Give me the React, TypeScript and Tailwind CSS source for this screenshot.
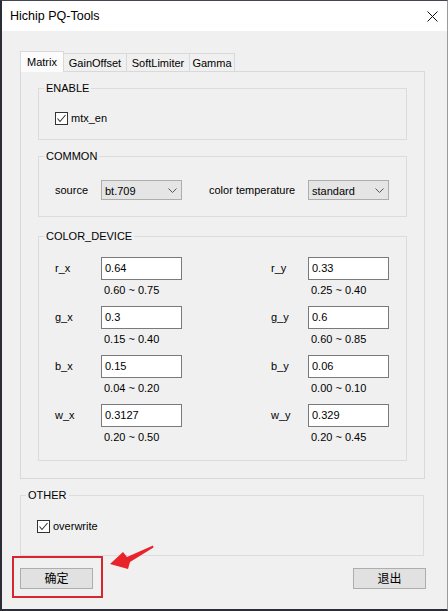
import React from "react";

const CheckBox = () => (
  <span className="w-[13px] h-[13px] border border-[#333333] bg-white flex items-center justify-center shrink-0">
    <svg width="11" height="11" viewBox="0 0 11 11">
      <polyline points="1.5,5.5 4,8.5 9.5,2" fill="none" stroke="#333333" strokeWidth="1.1" />
    </svg>
  </span>
);

const Group = ({
  title,
  className,
  children,
}: {
  title: string;
  className: string;
  children: React.ReactNode;
}) => (
  <div className={`relative border border-[#dcdcdc] ${className}`}>
    <span className="absolute -top-[7px] left-[5px] px-[2px] bg-[#f0f0f0] leading-[13px]">
      {title}
    </span>
    {children}
  </div>
);

const Combo = ({ value }: { value: string }) => (
  <div className="w-[81px] h-[20px] border border-[#adadad] bg-[#e5e5e5] flex items-center justify-between pl-[3px] pr-[4px]">
    <span className="pt-[2px]">{value}</span>
    <svg width="9" height="5" viewBox="0 0 9 5">
      <polyline points="0.5,0.5 4.5,4.5 8.5,0.5" fill="none" stroke="#555555" />
    </svg>
  </div>
);

type FieldProps = {
  label: string;
  value: string;
  range: string;
  labelW: string;
  rangePad: string;
};

const Field = ({ label, value, range, labelW, rangePad }: FieldProps) => (
  <div className="flex flex-col">
    <div className="flex items-center">
      <span className={labelW}>{label}</span>
      <div className="w-[81px] h-[23px] border border-[#7a7a7a] bg-white flex items-center pl-[3px]">
        {value}
      </div>
    </div>
    <span className={`mt-[4px] leading-[13px] ${rangePad}`}>{range}</span>
  </div>
);

const rows = [
  { l: ["r_x", "0.64", "0.60 ~ 0.75"], r: ["r_y", "0.33", "0.25 ~ 0.40"] },
  { l: ["g_x", "0.3", "0.15 ~ 0.40"], r: ["g_y", "0.6", "0.60 ~ 0.85"] },
  { l: ["b_x", "0.15", "0.04 ~ 0.20"], r: ["b_y", "0.06", "0.00 ~ 0.10"] },
  { l: ["w_x", "0.3127", "0.20 ~ 0.50"], r: ["w_y", "0.329", "0.20 ~ 0.45"] },
];

const tabs = ["GainOffset", "SoftLimiter", "Gamma"];
const tabW = ["w-[63px]", "w-[63px]", "w-[45px]"];

export default function App() {
  return (
    <div className="relative w-[448px] h-[611px] overflow-hidden bg-[#f0f0f0] border-t border-l-2 border-b-2 border-r border-t-[#45454f] border-l-[#2c2c36] border-b-[#2c2c36] border-r-[#9a9aa0] font-['Liberation_Sans','Noto_Sans_CJK_SC',sans-serif] text-[11px] text-black">
      {/* title bar */}
      <div className="h-[30px] bg-white flex items-center justify-between pl-[8px] pr-[9px]">
        <span className="text-[12.5px]">Hichip PQ-Tools</span>
        <svg width="11" height="11" viewBox="0 0 11 11">
          <path d="M0.5 0.5 L10.5 10.5 M10.5 0.5 L0.5 10.5" stroke="#111111" strokeWidth="1" />
        </svg>
      </div>

      <div className="pl-[18px] pt-[20px]">
        {/* tabs */}
        <div className="relative z-10 flex items-end h-[21px] -mb-px">
          <div className="w-[44px] h-[21px] bg-[#fcfcfc] border border-b-0 border-[#d9d9d9] flex items-center justify-center">
            Matrix
          </div>
          {tabs.map((t, i) => (
            <div
              key={t}
              className={`${tabW[i]} h-[18px] mb-px border border-b-0 border-l-0 border-[#d9d9d9] flex items-center justify-center pt-[2px]`}
            >
              {t}
            </div>
          ))}
        </div>

        {/* pane */}
        <div className="w-[405px] h-[408px] border border-[#d9d9d9] px-[17px] pt-[16px] flex flex-col">
          <Group title="ENABLE" className="h-[52px]">
            <div className="flex items-center gap-[3px] pl-[16px] pt-[23px]">
              <CheckBox />
              <span className="leading-[13px]">mtx_en</span>
            </div>
          </Group>

          <Group title="COMMON" className="mt-[16px] h-[61px]">
            <div className="flex items-center pl-[16px] pt-[23px]">
              <span className="w-[46px]">source</span>
              <Combo value="bt.709" />
              <span className="ml-[27px] w-[99px]">color temperature</span>
              <Combo value="standard" />
            </div>
          </Group>

          <Group title="COLOR_DEVICE" className="mt-[19px] h-[225px]">
            <div className="grid grid-cols-[216px_1fr] gap-y-[9px] pl-[16px] pt-[20px]">
              {rows.map((row) => (
                <React.Fragment key={row.l[0]}>
                  <Field
                    label={row.l[0]}
                    value={row.l[1]}
                    range={row.l[2]}
                    labelW="w-[46px]"
                    rangePad="pl-[49px]"
                  />
                  <Field
                    label={row.r[0]}
                    value={row.r[1]}
                    range={row.r[2]}
                    labelW="w-[37px]"
                    rangePad="pl-[40px]"
                  />
                </React.Fragment>
              ))}
            </div>
          </Group>
        </div>

        <Group title="OTHER" className="mt-[16px] w-[404px] h-[61px]">
          <div className="flex items-center gap-[3px] pl-[16px] pt-[24px]">
            <CheckBox />
            <span className="leading-[13px]">overwrite</span>
          </div>
        </Group>

        <div className="mt-[12px] w-[406px] flex justify-between">
          <button className="w-[73px] h-[21px] bg-[#e1e1e1] border border-[#adadad] text-[12px] flex items-center justify-center">
            确定
          </button>
          <button className="w-[73px] h-[21px] bg-[#e1e1e1] border border-[#adadad] text-[12px] flex items-center justify-center">
            退出
          </button>
        </div>
      </div>

      {/* annotation */}
      <div className="absolute left-[10px] top-[555px] w-[91px] h-[42px] border-2 border-[#d8262e] pointer-events-none" />
      <svg
        className="absolute left-[98px] top-[529px] pointer-events-none"
        width="60"
        height="50"
        viewBox="100 530 60 50"
      >
        <path
          d="M110 564 L123 552 L127 557 L153 545.5 L153.5 547.5 L130 562 L128 569 Z"
          fill="#e8232a"
        />
      </svg>
    </div>
  );
}
